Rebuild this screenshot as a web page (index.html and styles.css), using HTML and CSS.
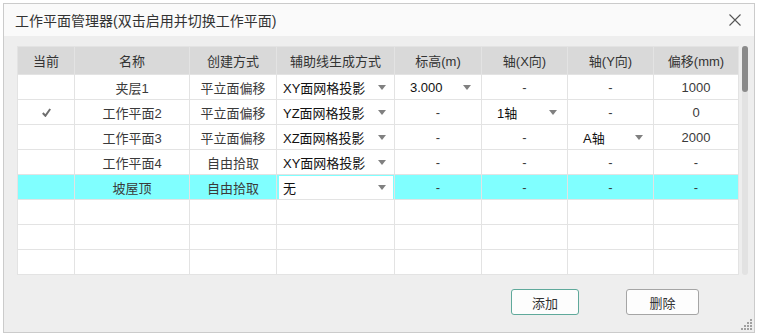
FILE: index.html
```html
<!DOCTYPE html>
<html lang="zh-CN">
  <head>
    <meta charset="UTF-8">
    <meta name="viewport" content="width=device-width, initial-scale=1.0">
    <title>工作平面管理器</title>
    <link rel="stylesheet" href="styles.css">
  </head>
  <body>
    <div class="dialog">
      <div class="titlebar">
        <span class="title">工作平面管理器(双击启用并切换工作平面)</span>
        <svg class="close" width="12" height="12" viewBox="0 0 12 12">
          <path d="M0.5 0.5 L11.5 11.5 M11.5 0.5 L0.5 11.5" stroke="#555" stroke-width="1.1" fill="none"/>
        </svg>
      </div>
      <div class="content">
        <div class="grid-wrap">
          <div class="grid">
            <div class="cell hd">当前</div>
            <div class="cell hd">名称</div>
            <div class="cell hd">创建方式</div>
            <div class="cell hd">辅助线生成方式</div>
            <div class="cell hd">标高(m)</div>
            <div class="cell hd">轴(X向)</div>
            <div class="cell hd">轴(Y向)</div>
            <div class="cell hd">偏移(mm)</div>

            <div class="cell"></div>
            <div class="cell">夹层1</div>
            <div class="cell">平立面偏移</div>
            <div class="cell combo"><span>XY面网格投影</span><i class="arrow"></i></div>
            <div class="cell combo wide"><span>3.000</span><i class="arrow"></i></div>
            <div class="cell">-</div>
            <div class="cell">-</div>
            <div class="cell">1000</div>

            <div class="cell">
              <svg width="9" height="9" viewBox="0 0 9 9"><path d="M0.8 5 L3.4 7.8 L8.2 1" stroke="#6e6e6e" stroke-width="2" fill="none"/></svg>
            </div>
            <div class="cell">工作平面2</div>
            <div class="cell">平立面偏移</div>
            <div class="cell combo"><span>YZ面网格投影</span><i class="arrow"></i></div>
            <div class="cell">-</div>
            <div class="cell combo wide"><span>1轴</span><i class="arrow"></i></div>
            <div class="cell">-</div>
            <div class="cell">0</div>

            <div class="cell"></div>
            <div class="cell">工作平面3</div>
            <div class="cell">平立面偏移</div>
            <div class="cell combo"><span>XZ面网格投影</span><i class="arrow"></i></div>
            <div class="cell">-</div>
            <div class="cell">-</div>
            <div class="cell combo wide"><span>A轴</span><i class="arrow"></i></div>
            <div class="cell">2000</div>

            <div class="cell"></div>
            <div class="cell">工作平面4</div>
            <div class="cell">自由拾取</div>
            <div class="cell combo"><span>XY面网格投影</span><i class="arrow"></i></div>
            <div class="cell">-</div>
            <div class="cell">-</div>
            <div class="cell">-</div>
            <div class="cell">-</div>

            <div class="cell sel"></div>
            <div class="cell sel">坡屋顶</div>
            <div class="cell sel">自由拾取</div>
            <div class="cell sel edit"><div class="edit-box"><span>无</span><i class="arrow"></i></div></div>
            <div class="cell sel">-</div>
            <div class="cell sel">-</div>
            <div class="cell sel">-</div>
            <div class="cell sel">-</div>

            <div class="cell"></div><div class="cell"></div><div class="cell"></div><div class="cell"></div>
            <div class="cell"></div><div class="cell"></div><div class="cell"></div><div class="cell"></div>
            <div class="cell"></div><div class="cell"></div><div class="cell"></div><div class="cell"></div>
            <div class="cell"></div><div class="cell"></div><div class="cell"></div><div class="cell"></div>
            <div class="cell"></div><div class="cell"></div><div class="cell"></div><div class="cell"></div>
            <div class="cell"></div><div class="cell"></div><div class="cell"></div><div class="cell"></div>
          </div>
          <div class="scrollbar"><div class="thumb"></div></div>
        </div>
        <div class="actions">
          <button class="btn primary">添加</button>
          <button class="btn">删除</button>
        </div>
        <svg class="grip" width="12" height="12" viewBox="0 0 12 12" fill="#a0a0a0">
          <rect x="9" y="0" width="2" height="2"/>
          <rect x="6" y="3" width="2" height="2"/><rect x="9" y="3" width="2" height="2"/>
          <rect x="3" y="6" width="2" height="2"/><rect x="6" y="6" width="2" height="2"/><rect x="9" y="6" width="2" height="2"/>
          <rect x="0" y="9" width="2" height="2"/><rect x="3" y="9" width="2" height="2"/><rect x="6" y="9" width="2" height="2"/><rect x="9" y="9" width="2" height="2"/>
        </svg>
      </div>
    </div>
  </body>
</html>
```

FILE: styles.css
```css
body {
  margin: 0;
  padding: 3px;
  background: #ffffff;
  font-family: "Liberation Sans", "Noto Sans CJK SC", sans-serif;
  color: #333;
}
.dialog {
  width: 750px;
  height: 328px;
  border: 1px solid #cbcbcb;
  background: #eeeeee;
  display: flex;
  flex-direction: column;
}
.titlebar {
  height: 32px;
  background: #fafafa;
  display: flex;
  align-items: center;
  justify-content: space-between;
  padding: 0 13px 0 11px;
}
.title {
  font-size: 14px;
  color: #333;
}
.content {
  position: relative;
  flex: 1;
  padding: 10px 5px 0 13px;
}
.grid-wrap {
  display: flex;
  gap: 3px;
}
.grid {
  display: grid;
  grid-template-columns: 56px 114px 86px 117px 86px 85px 85px 84px;
  grid-template-rows: 27px repeat(8, 24px);
  gap: 1px;
  padding: 1px;
  background: #e3e3e3;
}
.cell {
  background: #ffffff;
  display: flex;
  align-items: center;
  justify-content: center;
  font-size: 13px;
  color: #3a3a3a;
  white-space: nowrap;
}
.hd {
  background: #d9d9d9;
  color: #333;
}
.combo {
  justify-content: space-between;
  padding: 0 8px 0 6px;
  color: #111;
}
.combo.wide {
  padding: 0 10px 0 15px;
}
.sel {
  background: #80ffff;
}
.edit {
  padding: 1px 1px 0 2px;
  align-items: stretch;
}
.edit-box {
  flex: 1;
  background: #ffffff;
  display: flex;
  align-items: center;
  justify-content: space-between;
  padding: 0 7px 0 4px;
  color: #111;
}
.arrow {
  width: 0;
  height: 0;
  border-left: 4.5px solid transparent;
  border-right: 4.5px solid transparent;
  border-top: 5px solid #808080;
}
.scrollbar {
  width: 6px;
  height: 229px;
  background: #e2e2e2;
  border-radius: 3px;
}
.thumb {
  height: 46px;
  background: #8a8a8a;
  border-radius: 3px;
}
.actions {
  display: flex;
  justify-content: flex-end;
  gap: 47px;
  margin-top: 14px;
  padding-right: 50px;
}
.btn {
  height: 26px;
  width: 73px;
  background: #fdfdfd;
  border: 1px solid #a5a5a5;
  border-radius: 3px;
  font-family: inherit;
  font-size: 13px;
  color: #333;
}
.btn.primary {
  width: 68px;
  border-color: #5fa99b;
}
.grip {
  position: absolute;
  right: 1px;
  bottom: 1px;
}
```
